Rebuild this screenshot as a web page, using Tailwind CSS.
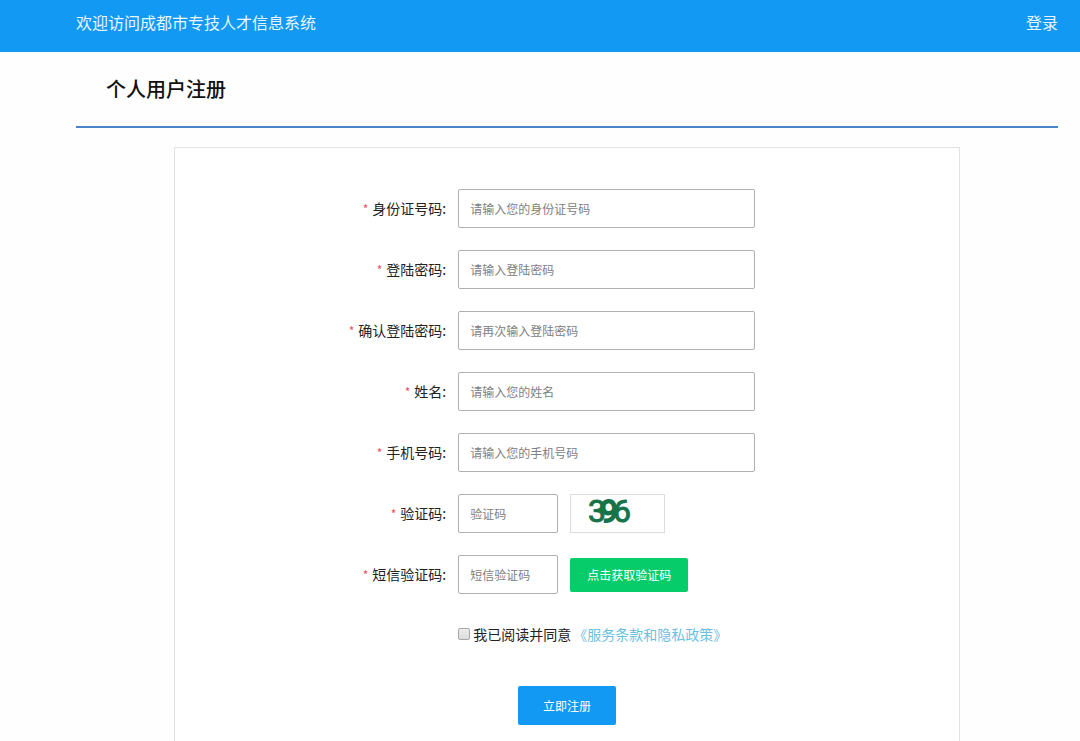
<!DOCTYPE html>
<html lang="zh-CN">
<head>
<meta charset="utf-8">
<meta name="viewport" content="width=device-width, initial-scale=1">
<title>个人用户注册</title>
<script src="https://cdn.jsdelivr.net/npm/@tailwindcss/browser@4"></script>
</head>
<body class="h-screen overflow-hidden flex flex-col bg-[#fefefe] text-[#222] text-sm font-['Noto_Sans_CJK_SC',sans-serif]">
<header class="shrink-0 h-[52px] pb-2 pl-[76px] pr-[22px] flex items-center justify-between bg-[#1199f3] text-[#e6f6ff] text-base">
  <span>欢迎访问成都市专技人才信息系统</span>
  <a href="#login">登录</a>
</header>
<main class="grow flex flex-col ml-[76px] mr-[22px]">
  <h1 class="shrink-0 h-[76px] pl-[30px] flex items-center border-b-2 border-[#4a83c8] text-xl font-medium text-[#111]">个人用户注册</h1>
  <form class="grow w-4/5 mx-auto mt-[19px] pt-[41px] border border-b-0 border-[#e2e2e2] bg-white flex flex-col gap-[22px]">
    <div class="flex items-center gap-3">
      <label for="idno" class="w-[271px] pb-[2px] text-right"><span class="text-xs text-[#f0505a] mr-1">*</span>身份证号码:</label>
      <input id="idno" type="text" placeholder="请输入您的身份证号码" class="w-[297px] h-[39px] px-[11px] border border-[#b0b0b0] rounded-xs bg-white text-xs placeholder:text-[#808080]">
    </div>
    <div class="flex items-center gap-3">
      <label for="pwd" class="w-[271px] pb-[2px] text-right"><span class="text-xs text-[#f0505a] mr-1">*</span>登陆密码:</label>
      <input id="pwd" type="password" placeholder="请输入登陆密码" class="w-[297px] h-[39px] px-[11px] border border-[#b0b0b0] rounded-xs bg-white text-xs placeholder:text-[#808080]">
    </div>
    <div class="flex items-center gap-3">
      <label for="pwd2" class="w-[271px] pb-[2px] text-right"><span class="text-xs text-[#f0505a] mr-1">*</span>确认登陆密码:</label>
      <input id="pwd2" type="password" placeholder="请再次输入登陆密码" class="w-[297px] h-[39px] px-[11px] border border-[#b0b0b0] rounded-xs bg-white text-xs placeholder:text-[#808080]">
    </div>
    <div class="flex items-center gap-3">
      <label for="name" class="w-[271px] pb-[2px] text-right"><span class="text-xs text-[#f0505a] mr-1">*</span>姓名:</label>
      <input id="name" type="text" placeholder="请输入您的姓名" class="w-[297px] h-[39px] px-[11px] border border-[#b0b0b0] rounded-xs bg-white text-xs placeholder:text-[#808080]">
    </div>
    <div class="flex items-center gap-3">
      <label for="phone" class="w-[271px] pb-[2px] text-right"><span class="text-xs text-[#f0505a] mr-1">*</span>手机号码:</label>
      <input id="phone" type="tel" placeholder="请输入您的手机号码" class="w-[297px] h-[39px] px-[11px] border border-[#b0b0b0] rounded-xs bg-white text-xs placeholder:text-[#808080]">
    </div>
    <div class="flex items-center gap-3">
      <label for="captcha" class="w-[271px] pb-[2px] text-right"><span class="text-xs text-[#f0505a] mr-1">*</span>验证码:</label>
      <input id="captcha" type="text" placeholder="验证码" class="w-[100px] h-[39px] px-[11px] border border-[#b0b0b0] rounded-xs bg-white text-xs placeholder:text-[#808080]">
      <svg class="w-[95px] h-[39px] overflow-visible border border-[#dcdcdc] bg-white font-['Roboto',sans-serif]" viewBox="0 0 93 37" role="img" aria-label="396" fill="#16734a" stroke="#16734a" font-size="32">
        <text x="17" y="27" stroke-width="1">3</text>
        <text x="29" y="27" stroke-width="2">9</text>
        <text x="42" y="27" stroke-width="1">6</text>
      </svg>
    </div>
    <div class="flex items-center gap-3">
      <label for="sms" class="w-[271px] pb-[2px] text-right"><span class="text-xs text-[#f0505a] mr-1">*</span>短信验证码:</label>
      <input id="sms" type="text" placeholder="短信验证码" class="w-[100px] h-[39px] px-[11px] border border-[#b0b0b0] rounded-xs bg-white text-xs placeholder:text-[#808080]">
      <button type="button" class="w-[118px] h-[34px] rounded-xs bg-[#06cc69] text-white text-xs">点击获取验证码</button>
    </div>
    <div class="h-[39px] pb-[3px] pl-[283px] flex items-center">
      <input id="agree" type="checkbox" class="appearance-none size-3 mr-[3px] border border-[#a8a8a8] rounded-xs bg-linear-to-b from-[#eeeeee] to-[#dcdcdc]">
      <label for="agree">我已阅读并同意</label>
      <a href="#terms" class="ml-[2px] text-[#6cbfe0]">《服务条款和隐私政策》</a>
    </div>
    <button type="submit" class="self-center mt-[9px] w-[98px] h-[39px] shrink-0 rounded-xs bg-[#1199f3] text-white text-xs">立即注册</button>
  </form>
</main>
</body>
</html>
